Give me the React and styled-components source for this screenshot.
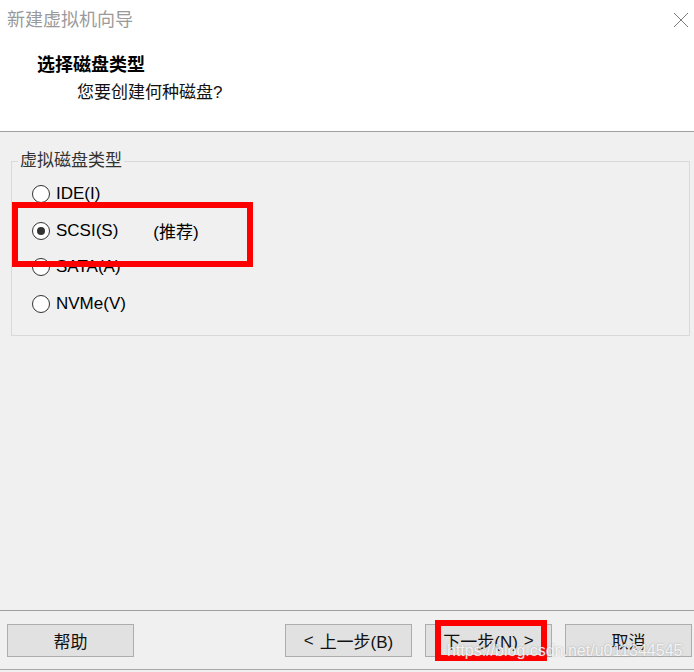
import React from 'react';
import styled, { createGlobalStyle } from 'styled-components';

const GlobalStyle = createGlobalStyle`
	html, body {
		margin: 0;
		padding: 0;
		background: #f0f0f0;
	}
	* {
		box-sizing: border-box;
	}
`;

const FONT = `"Liberation Sans", "Noto Sans CJK SC", sans-serif`;

const Window = styled.div`
	position: relative;
	width: 694px;
	height: 672px;
	display: flex;
	flex-direction: column;
	background: #f0f0f0;
	font-family: ${ FONT };
	color: #111;
	overflow: hidden;
`;

const Header = styled.header`
	height: 132px;
	background: #fff;
	border-bottom: 1px solid #a0a0a0;
	padding-top: 8px;
`;

const TitleRow = styled.div`
	height: 24px;
	display: flex;
	align-items: center;
	justify-content: space-between;
	padding: 0 5px 0 7px;
`;

const Title = styled.span`
	font-size: 18px;
	line-height: 24px;
	color: #9a9a9a;
`;

const Close = styled.button`
	border: none;
	background: none;
	padding: 0;
	width: 16px;
	height: 16px;
	display: flex;
	cursor: pointer;
`;

const Heading = styled.div`
	margin-top: 21px;
	padding-left: 37px;
	font-size: 18px;
	line-height: 24px;
	font-weight: 700;
	color: #000;
`;

const SubHeading = styled.div`
	margin-top: 4px;
	padding-left: 77px;
	font-size: 17px;
	line-height: 24px;
	color: #111;
`;

const Body = styled.main`
	flex: 1;
	padding: 19px 4px 0 11px;
`;

const Group = styled.fieldset`
	margin: 0;
	padding: 5px 0 0 0;
	height: 185px;
	border: 1px solid #d9d9d9;
	min-width: 0;
`;

const Legend = styled.legend`
	margin-left: 6px;
	padding: 0 2px;
	font-size: 17px;
	line-height: 20px;
	color: #333;
`;

const Option = styled.label`
	height: 36.5px;
	padding-left: 20px;
	display: flex;
	align-items: center;
	gap: 6px;
	font-size: 17px;
	color: #000;
	cursor: default;
`;

const Circle = styled.span`
	width: 18px;
	height: 18px;
	border-radius: 50%;
	border: 1px solid #333;
	background: #fff;
	display: flex;
	align-items: center;
	justify-content: center;
	&::after {
		content: '';
		width: 8px;
		height: 8px;
		border-radius: 50%;
		background: ${ ({ checked }) => (checked ? '#333' : 'transparent') };
	}
`;

const Note = styled.span`
	margin-left: 29px;
`;

const Footer = styled.footer`
	height: 62px;
	border-top: 1px solid #a0a0a0;
	padding: 13px 2px 0 7px;
	display: flex;
	justify-content: space-between;
	align-items: flex-start;
	position: relative;
	&::after {
		content: '';
		position: absolute;
		left: 0;
		right: 0;
		bottom: 2px;
		border-bottom: 1px solid #a8a8a8;
	}
`;

const ButtonGroup = styled.div`
	display: flex;
	gap: 13px;
`;

const Button = styled.button`
	width: 127px;
	height: 33px;
	background: #e1e1e1;
	border: 1px solid #adadad;
	font-family: ${ FONT };
	font-size: 17px;
	color: #111;
	padding: 0;
	display: flex;
	align-items: center;
	justify-content: center;
	gap: 6px;
`;

const Highlight = styled.div`
	position: absolute;
	border: 6px solid #ff0000;
	pointer-events: none;
`;

const Watermark = styled.span`
	position: absolute;
	left: 447px;
	top: 641px;
	font-family: "Liberation Sans", sans-serif;
	font-size: 16px;
	line-height: 20px;
	color: rgba(255, 255, 255, 0.85);
	text-shadow: 0 0 2px rgba(120, 120, 120, 0.6);
	white-space: nowrap;
	pointer-events: none;
`;

const CloseIcon = () => (
	<svg width="16" height="16" viewBox="0 0 16 16">
		<path d="M1 1 L15 15 M15 1 L1 15" stroke="#7a7a7a" strokeWidth="1" fill="none" />
	</svg>
);

const options = [
	{ id: 'ide', label: 'IDE(I)' },
	{ id: 'scsi', label: 'SCSI(S)', note: '(推荐)', checked: true },
	{ id: 'sata', label: 'SATA(A)' },
	{ id: 'nvme', label: 'NVMe(V)' },
];

export default function App() {
	return (
		<Window>
			<GlobalStyle />
			<Header>
				<TitleRow>
					<Title>新建虚拟机向导</Title>
					<Close aria-label="close"><CloseIcon /></Close>
				</TitleRow>
				<Heading>选择磁盘类型</Heading>
				<SubHeading>您要创建何种磁盘?</SubHeading>
			</Header>
			<Body>
				<Group>
					<Legend>虚拟磁盘类型</Legend>
					{ options.map(opt => (
						<Option key={ opt.id }>
							<Circle checked={ opt.checked } />
							<span>{ opt.label }</span>
							{ opt.note && <Note>{ opt.note }</Note> }
						</Option>
					)) }
				</Group>
			</Body>
			<Footer>
				<Button>帮助</Button>
				<ButtonGroup>
					<Button><span>&lt;</span><span>上一步(B)</span></Button>
					<Button><span>下一步(N)</span><span>&gt;</span></Button>
					<Button>取消</Button>
				</ButtonGroup>
			</Footer>
			<Highlight style={ { left: 12, top: 202, width: 241, height: 65 } } />
			<Highlight style={ { left: 435, top: 620, width: 112, height: 41 } } />
			<Watermark>https://blog.csdn.net/u011344545</Watermark>
		</Window>
	);
}
